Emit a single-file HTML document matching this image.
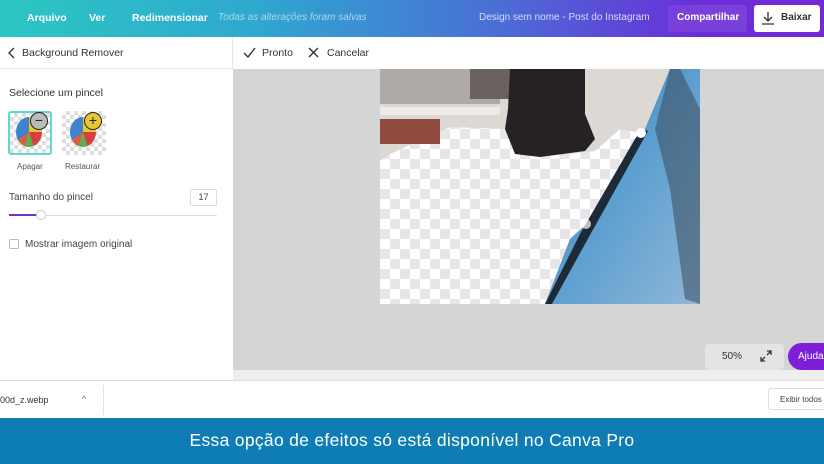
<!DOCTYPE html><html><head><meta charset="utf-8"><style>
*{margin:0;padding:0;box-sizing:border-box}
body{width:824px;height:464px;overflow:hidden;font-family:"Liberation Sans",sans-serif;position:relative;background:#fff}
.abs{position:absolute}
#top{left:0;top:0;width:824px;height:37px;background:linear-gradient(90deg,#2cc7c2 0%,#2fa9cf 30%,#4a6fd6 60%,#6a2ed8 85%,#7428d6 100%)}
#top span{position:absolute;top:12px;font-size:10.5px;color:#fff;font-weight:bold}
.ico{stroke:#333;fill:none;stroke-width:1.4}
</style></head><body>
<div id="top" class="abs">
<span style="left:27px">Arquivo</span><span style="left:89px">Ver</span><span style="left:132px">Redimensionar</span>
<span style="left:218px;font-weight:normal;font-style:italic;color:#a9d8ee;font-size:10px">Todas as alterações foram salvas</span>
<span style="left:479px;font-weight:normal;color:#d6def8;font-size:10px">Design sem nome - Post do Instagram</span>
<div class="abs" style="left:668px;top:5px;width:79px;height:27px;background:#7a40dc;border-radius:3px"></div>
<span style="left:677px;font-size:10px">Compartilhar</span>
<div class="abs" style="left:754px;top:5px;width:66px;height:27px;background:#fff;border-radius:3px"></div>
<svg class="abs" style="left:761px;top:11px" width="14" height="14"><path d="M7 1v9M3 6l4 4 4-4M1 13h12" stroke="#333" fill="none" stroke-width="1.3"/></svg>
<span style="left:781px;color:#333;font-size:10px">Baixar</span>
</div>
<div class="abs" style="left:0;top:37px;width:233px;height:343px;background:#fff"></div>
<div class="abs" style="left:0;top:68px;width:233px;height:1px;background:#e6e6e6"></div>
<div class="abs" style="left:232px;top:37px;width:1px;height:32px;background:#e6e6e6"></div>
<svg class="abs" style="left:8px;top:47px" width="8" height="12"><path d="M6 1L1 6l5 5" class="ico"/></svg>
<div class="abs" style="left:22px;top:47px;font-size:10.5px;color:#333">Background Remover</div>
<div class="abs" style="left:9px;top:87px;font-size:10.5px;color:#333">Selecione um pincel</div>
<div class="abs" style="left:8px;top:111px;width:44px;height:44px;border:2px solid #5fd6d0;border-radius:3px;background:repeating-conic-gradient(#ddd 0 25%,#fff 0 50%) 0 0/8px 8px"></div>
<div class="abs" style="left:16px;top:117px;width:26px;height:30px;border-radius:50%;background:conic-gradient(#e8c830 0 25%,#d84040 0 45%,#60b050 0 55%,#d86040 0 65%,#3f82cf 0 100%)"></div>
<div class="abs" style="left:30px;top:112px;width:18px;height:18px;border-radius:50%;border:1.5px solid #222;background:#bbb;font-size:14px;line-height:14px;text-align:center;color:#222">−</div>
<div class="abs" style="left:62px;top:111px;width:44px;height:44px;background:repeating-conic-gradient(#ddd 0 25%,#fff 0 50%) 0 0/8px 8px"></div>
<div class="abs" style="left:70px;top:117px;width:26px;height:30px;border-radius:50%;background:conic-gradient(#e8c830 0 25%,#d84040 0 45%,#60b050 0 55%,#d86040 0 65%,#3f82cf 0 100%)"></div>
<div class="abs" style="left:84px;top:112px;width:18px;height:18px;border-radius:50%;border:1.5px solid #222;background:#e8c830;font-size:14px;line-height:14px;text-align:center;color:#222">+</div>
<div class="abs" style="left:17px;top:162px;font-size:8px;color:#555">Apagar</div>
<div class="abs" style="left:65px;top:162px;font-size:8px;color:#555">Restaurar</div>
<div class="abs" style="left:9px;top:192px;font-size:10px;color:#444">Tamanho do pincel</div>
<div class="abs" style="left:190px;top:189px;width:27px;height:17px;border:1px solid #ddd;border-radius:2px;font-size:9px;color:#444;text-align:center;line-height:15px">17</div>
<div class="abs" style="left:9px;top:215px;width:208px;height:1px;background:#ddd"></div>
<div class="abs" style="left:9px;top:214px;width:30px;height:2px;background:#7b2fbf"></div>
<div class="abs" style="left:36px;top:210px;width:10px;height:10px;border-radius:50%;background:#fff;border:1px solid #ccc"></div>
<div class="abs" style="left:9px;top:239px;width:10px;height:10px;border:1px solid #bbb;border-radius:2px"></div>
<div class="abs" style="left:25px;top:239px;font-size:10px;color:#444">Mostrar imagem original</div>
<div class="abs" style="left:233px;top:37px;width:591px;height:32px;background:#fff"></div>
<svg class="abs" style="left:243px;top:47px" width="13" height="11"><path d="M1 6l4 4 7-9" class="ico"/></svg>
<div class="abs" style="left:262px;top:47px;font-size:10.5px;color:#333">Pronto</div>
<svg class="abs" style="left:308px;top:47px" width="11" height="11"><path d="M1 1l9 9M10 1l-9 9" class="ico"/></svg>
<div class="abs" style="left:327px;top:47px;font-size:10.5px;color:#333">Cancelar</div>
<div class="abs" style="left:233px;top:69px;width:591px;height:301px;background:#d5d5d5"></div>
<div class="abs" style="left:233px;top:370px;width:591px;height:10px;background:#eee"></div>
<svg class="abs" style="left:380px;top:69px" width="320" height="235" viewBox="0 0 320 235">
<defs><pattern id="ck" width="20" height="20" patternUnits="userSpaceOnUse"><rect width="20" height="20" fill="#fff"/><rect width="10" height="10" fill="#e6e6e8"/><rect x="10" y="10" width="10" height="10" fill="#e6e6e8"/></pattern>
<linearGradient id="bl" x1="0" y1="0" x2="1" y2="1"><stop offset="0" stop-color="#2f6ea0"/><stop offset=".5" stop-color="#5d9fd0"/><stop offset="1" stop-color="#8fb7d8"/></linearGradient></defs>
<rect width="320" height="235" fill="url(#ck)"/>
<path d="M0 0H320V235H165L190 170L210 150L235 115L262 64L240 60L215 82L160 88L135 85L125 60L70 58L10 85L0 92Z" fill="#dcd8d4"/>
<rect x="0" y="0" width="120" height="35" fill="#b0aaa6"/>
<rect x="0" y="50" width="60" height="25" fill="#8e4a3e"/>
<rect x="0" y="38" width="120" height="8" fill="#eeeae6"/>
<path d="M90 0H130V30H90Z" fill="#6a625e"/>
<path d="M130 0H205V45L215 70L205 82L160 88L135 85L125 60L128 40Z" fill="#262224"/>
<path d="M165 235L190 170L212 150L240 110L265 60L290 0H320V235Z" fill="url(#bl)"/>
<path d="M290 0L300 0L320 40V235L305 230L290 120L275 60Z" fill="#3a4a5a" opacity=".55"/>
<path d="M165 235L200 165L255 70L262 60L268 62L205 175L172 235Z" fill="#1d2a38"/>
<circle cx="261" cy="64" r="5" fill="#fff"/><circle cx="206" cy="155" r="5" fill="#fff" opacity=".7"/>
</svg>
<div class="abs" style="left:705px;top:344px;width:79px;height:26px;background:#e4e4e4;border-radius:4px;font-size:10px;color:#333;padding:7px 0 0 17px">50%</div>
<svg class="abs" style="left:760px;top:350px" width="12" height="12"><path d="M7 1h4v4M11 1L7 5M1 7v4h4M1 11l4-4" stroke="#333" fill="none" stroke-width="1.3"/></svg>
<div class="abs" style="left:788px;top:343px;width:50px;height:27px;background:#7d1fd8;border-radius:14px;color:#fff;font-size:10px;padding:8px 0 0 10px">Ajuda</div>
<div class="abs" style="left:0;top:380px;width:824px;height:38px;background:#fff;border-top:1px solid #ddd"></div>
<div class="abs" style="left:0;top:395px;font-size:9px;color:#333">00d_z.webp</div>
<div class="abs" style="left:82px;top:394px;font-size:9px;color:#666">^</div>
<div class="abs" style="left:103px;top:385px;width:1px;height:30px;background:#e2e2e2"></div>
<div class="abs" style="left:768px;top:388px;width:60px;height:22px;border:1px solid #ddd;border-radius:3px;font-size:8px;color:#345;padding:6px 0 0 11px">Exibir todos</div>
<div class="abs" style="left:0;top:418px;width:824px;height:46px;background:#0f7db5;color:#fff;font-size:17.5px;text-align:center;line-height:44px;letter-spacing:0.3px">Essa opção de efeitos só está disponível no Canva Pro</div>
</body></html>
